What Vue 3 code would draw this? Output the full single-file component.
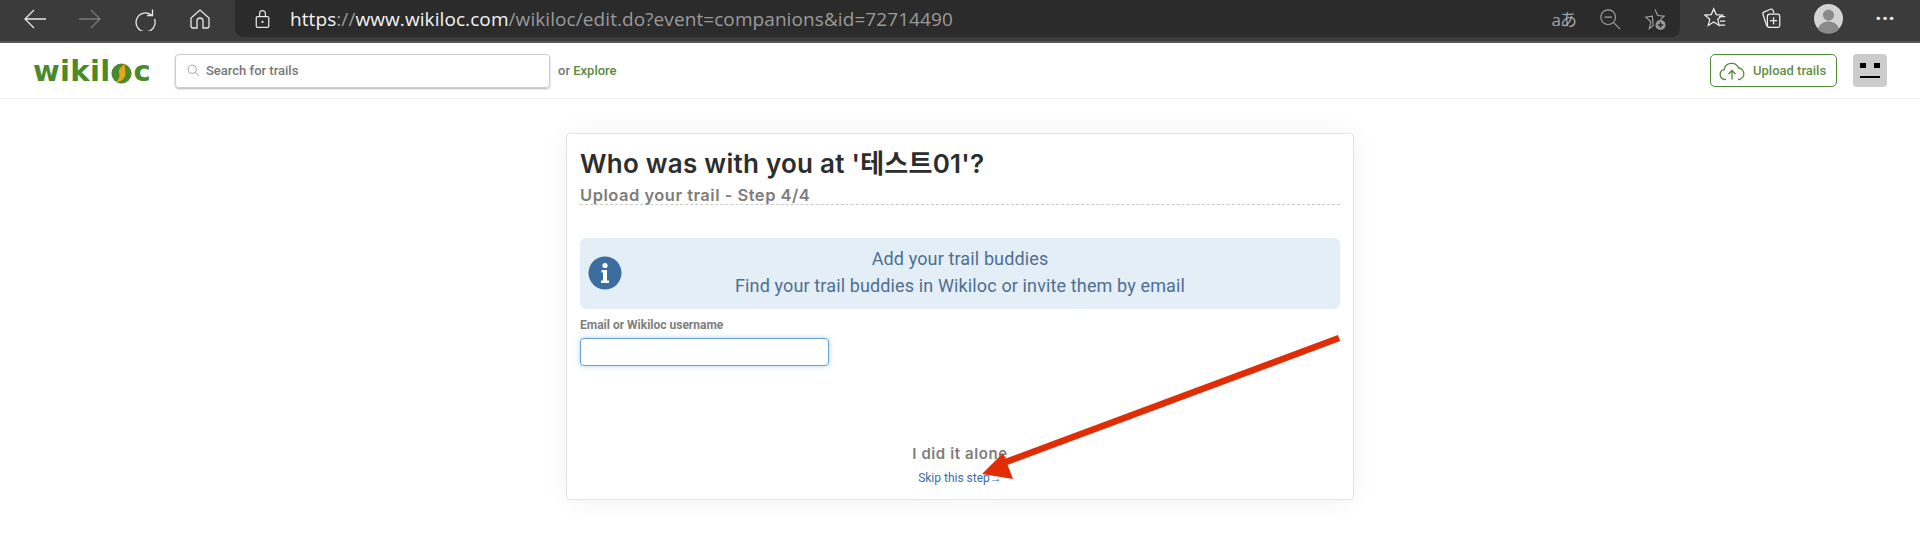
<template>
  <div class="page">
    <div class="browser">
      <div class="browser__nav">
        <svg class="nav-icon" viewBox="0 0 24 24"><path d="M23 12H2M11 3l-9 9 9 9" /></svg>
        <svg class="nav-icon nav-icon--off" viewBox="0 0 24 24"><path d="M1 12h21M13 3l9 9-9 9" /></svg>
        <svg class="nav-icon" viewBox="0 0 24 24"><path d="M19.5 2.5v6H14M19.2 8.500A9.500 9.500 0 1 0 21.500 12" /></svg>
        <svg class="nav-icon" viewBox="0 0 24 24"><path d="M3 11l9-8 9 8v8a2 2 0 0 1-2 2h-4v-7a3 3 0 0 0-6 0v7H5a2 2 0 0 1-2-2z" /></svg>
      </div>
      <div class="address">
        <svg class="lock" viewBox="0 0 18 24"><path d="M3 9h12a1.500 1.500 0 0 1 1.500 1.500v10A1.500 1.500 0 0 1 15 22H3a1.500 1.500 0 0 1-1.500-1.500v-10A1.500 1.500 0 0 1 3 9zM5.500 9V5.500a3.500 3.500 0 0 1 7 0V9" /><circle cx="9" cy="15.500" r="1.300" fill="#eee" stroke="none" /></svg>
        <span class="url"><b>https</b><i>://</i><b>www.wikiloc.com</b><i>/wikiloc/edit.do?event=companions&amp;id=72714490</i></span>
        <div class="address__tools">
          <span class="translate">aあ</span>
          <svg class="tool-icon" viewBox="0 0 24 24"><circle cx="10" cy="10" r="8" /><path d="M6 10h8M16 16l7 7" /></svg>
          <svg class="tool-icon" viewBox="0 0 24 24"><path d="M12 1.500l2.900 6.700 7.100.7-4.200 3.700M10 19.200l-4.200 3.300 1.700-7.500L2 9.900l7.100-1z" /><circle cx="18" cy="18.500" r="5.500" fill="#9a9a9a" stroke="none" /><path d="M15 18.500h6M18 15.500v6" stroke="#2b2b2b" stroke-width="1.600" /></svg>
        </div>
      </div>
      <div class="browser__end">
        <svg class="end-icon" viewBox="0 0 26 26"><path d="M11 2l2.800 6.600 7.200.6-5.500 4.700 1.700 7L11 17l-6.200 3.900 1.700-7L1 9.200l7.200-.6zM17 11h7M18 16h6M18 20.500h6" /></svg>
        <svg class="end-icon" viewBox="0 0 26 26"><path d="M9 22L4.500 8.500a2.500 2.500 0 0 1 1.500-3L13 2.500a2.500 2.500 0 0 1 3 1.500l.8 3" /><rect x="9.500" y="8" width="14" height="15" rx="2.500" /><path d="M16.500 11.500v8M12.500 15.500h8" /></svg>
        <svg class="profile" viewBox="0 0 30 30">
          <circle cx="15" cy="15" r="15" fill="#d4d4d4" />
          <circle cx="15" cy="11.500" r="5.800" fill="#8a8a8a" />
          <path d="M4 26c2-6 6-8 11-8s9 2 11 8a15 15 0 0 1-22 0z" fill="#8a8a8a" />
        </svg>
        <span class="dots">···</span>
      </div>
    </div>

    <header class="topbar">
      <div class="logo">
        <span>wikil</span>
        <svg class="logo__o" viewBox="0 0 24 24">
          <circle cx="12" cy="12" r="11.500" fill="#4a8a2a" />
          <path d="M16 1C10 5 8 8 9.500 12c1 3-.5 7-4 10 6 0 11-4 11-10 0-4-1-7-.5-11z" fill="#e9a21b" />
        </svg>
        <span>c</span>
      </div>
      <div class="search">
        <svg class="search__icon" viewBox="0 0 16 16"><circle cx="6.500" cy="6.500" r="5" /><path d="M10.300 10.300L15 15" /></svg>
        <span>Search for trails</span>
      </div>
      <span class="explore">or <a>Explore</a></span>
      <div class="topbar__end">
        <a class="upload">
          <svg class="upload__icon" viewBox="0 0 26 20"><path d="M7 18.500H6a5 5 0 0 1-.8-9.900A7.500 7.500 0 0 1 19.500 7 5.800 5.800 0 0 1 20 18.500h-1M13 18.500v-9M9.500 13L13 9.500l3.500 3.500" /></svg>
          Upload trails
        </a>
        <div class="robot">
          <div class="robot__eyes"><i></i><i></i></div>
          <div class="robot__mouth"></div>
        </div>
      </div>
    </header>

    <main class="content">
      <section class="card">
        <h1 class="card__title">Who was with you at '테스트01'?</h1>
        <h2 class="card__step">Upload your trail - Step 4/4</h2>
        <div class="info">
          <svg class="info__icon" viewBox="0 0 34 34">
            <circle cx="17" cy="17" r="16.500" fill="#3b6e9e" />
            <circle cx="17" cy="9.500" r="2.600" fill="#fff" />
            <path d="M13.500 14h5.500v10.500h2v2.500h-8v-2.500h2v-8h-1.500z" fill="#fff" />
          </svg>
          <p>Add your trail buddies<br />Find your trail buddies in Wikiloc or invite them by email</p>
        </div>
        <label class="field-label">Email or Wikiloc username</label>
        <input class="field" type="text" />
        <div class="alone">
          <h3>I did it alone</h3>
          <a>Skip this step→</a>
        </div>
      </section>
    </main>

    <svg class="marker" viewBox="0 0 1920 536">
      <path d="M1339 338L995 466" stroke="#e02d06" stroke-width="6.500" fill="none" />
      <path d="M982 474L1003 453 1013 479z" fill="#e02d06" />
    </svg>
  </div>
</template>

<script setup>
</script>

<style>
html,
body {
  background: #fff;
  overflow: hidden;
}
</style>

<style scoped>
.page {
  position: relative;
  height: 536px;
  overflow: hidden;
  background: #fff;
  font-family: Roboto, "Liberation Sans", sans-serif;
}

.browser {
  display: flex;
  height: 41px;
  background: #3b3b3b;
  border-bottom: 2px solid #575757;
}
.browser__nav {
  display: flex;
  align-items: center;
  gap: 31px;
  width: 235px;
  padding: 0 0 4px 23px;
  box-sizing: border-box;
  flex-shrink: 0;
}
.nav-icon {
  width: 24px;
  height: 24px;
  fill: none;
  stroke: #e8e8e8;
  stroke-width: 1.3;
}
.nav-icon--off {
  stroke: #7b7b7b;
}
.address {
  display: flex;
  align-items: center;
  width: 1445px;
  height: 37px;
  padding: 0 14px 0 20px;
  box-sizing: border-box;
  background: #2b2b2b;
  border-radius: 0 0 8px 8px;
}
.lock {
  width: 15px;
  height: 20px;
  margin-right: 20px;
  fill: none;
  stroke: #e6e6e6;
  stroke-width: 1.5;
}
.url {
  font-family: "Open Sans", sans-serif;
  font-size: 19px;
  letter-spacing: 0.08px;
  white-space: nowrap;
}
.url b {
  font-weight: 400;
  color: #f4f4f4;
}
.url i {
  font-style: normal;
  color: #9a9a9a;
}
.address__tools {
  display: flex;
  align-items: center;
  gap: 23px;
  margin-left: auto;
}
.translate {
  font-family: "Open Sans", "Noto Sans CJK JP", sans-serif;
  font-size: 17px;
  color: #a5a5a5;
  letter-spacing: -1px;
}
.tool-icon {
  width: 22px;
  height: 22px;
  fill: none;
  stroke: #a5a5a5;
  stroke-width: 1.2;
}
.browser__end {
  display: flex;
  align-items: center;
  flex: 1;
  padding: 0 0 4px 24px;
  gap: 32px;
  color: #eee;
}
.end-icon {
  width: 23px;
  height: 23px;
  fill: none;
  stroke: #eee;
  stroke-width: 1.4;
}
.profile {
  width: 29px;
  height: 33px;
}
.dots {
  font-size: 22px;
  font-weight: 700;
}

.topbar {
  display: flex;
  align-items: center;
  height: 55px;
  padding-left: 33px;
  border-bottom: 1px solid #eee;
}
.logo {
  display: flex;
  align-items: center;
  width: 142px;
  font-family: "DejaVu Sans", sans-serif;
  font-weight: 700;
  font-size: 29px;
  letter-spacing: 0.3px;
  color: #4a8a2a;
  flex-shrink: 0;
}
.logo__o {
  width: 21px;
  height: 21px;
  margin: 5px 1px 0;
}
.search {
  display: flex;
  align-items: center;
  gap: 6px;
  width: 375px;
  height: 34px;
  padding-left: 11px;
  box-sizing: border-box;
  border: 1px solid #ccc;
  border-radius: 4px;
  box-shadow: 0 1px 2px rgba(0, 0, 0, 0.3);
  font-size: 13px;
  font-weight: 500;
  color: #777;
}
.search__icon {
  width: 13px;
  height: 13px;
  fill: none;
  stroke: #999;
  stroke-width: 1.1;
}
.explore {
  margin-left: 8px;
  font-size: 13px;
  font-weight: 500;
  color: #777;
}
.explore a {
  color: #5a8a42;
}
.topbar__end {
  display: flex;
  align-items: center;
  gap: 16px;
  margin-left: auto;
  padding-right: 33px;
}
.upload {
  display: flex;
  align-items: center;
  gap: 8px;
  width: 127px;
  height: 33px;
  padding-left: 8px;
  box-sizing: border-box;
  border: 1px solid #4f8a35;
  border-radius: 5px;
  font-size: 13px;
  font-weight: 500;
  color: #5f8f48;
}
.upload__icon {
  width: 26px;
  height: 20px;
  fill: none;
  stroke: #4f8a35;
  stroke-width: 1.3;
}
.robot {
  display: flex;
  flex-direction: column;
  align-items: center;
  justify-content: center;
  gap: 8px;
  width: 34px;
  height: 33px;
  background: #ccc;
  border-radius: 4px;
}
.robot__eyes {
  display: flex;
  justify-content: space-between;
  width: 20px;
}
.robot__eyes i {
  width: 6px;
  height: 5px;
  background: #000;
}
.robot__mouth {
  width: 20px;
  height: 2px;
  background: #000;
}

.content {
  display: flex;
  justify-content: center;
  padding-top: 34px;
  background: #fff;
}
.card {
  display: flex;
  flex-direction: column;
  width: 788px;
  height: 367px;
  padding: 14px 13px 0;
  box-sizing: border-box;
  background: #fff;
  border: 1px solid #e4e4e4;
  border-radius: 4px;
  box-shadow: 0 0 24px rgba(0, 0, 0, 0.06);
}
.card__title {
  margin: 0;
  font-family: Inter, "Noto Sans CJK KR", sans-serif;
  font-size: 26px;
  font-weight: 600;
  letter-spacing: 0.25px;
  line-height: 32px;
  color: #2d2d2d;
}
.card__step {
  margin: 0;
  height: 25px;
  padding-top: 4px;
  box-sizing: border-box;
  border-bottom: 1px dashed #c9c9c9;
  font-family: Inter, sans-serif;
  font-size: 16.5px;
  font-weight: 600;
  letter-spacing: 0.5px;
  line-height: 22px;
  color: #7d7d7d;
}
.info {
  position: relative;
  display: flex;
  align-items: center;
  justify-content: center;
  height: 71px;
  margin-top: 33px;
  padding-bottom: 3px;
  box-sizing: border-box;
  background: #e4eef7;
  border-radius: 6px;
  font-size: 18px;
  letter-spacing: 0.13px;
  line-height: 27px;
  color: #4d6f92;
  text-align: center;
}
.info p {
  margin: 0;
}
.info__icon {
  position: absolute;
  left: 8px;
  top: 18px;
  width: 34px;
  height: 34px;
}
.field-label {
  margin-top: 9px;
  font-size: 12px;
  font-weight: 700;
  line-height: 14px;
  color: #7d7d7d;
}
.field {
  width: 249px;
  height: 28px;
  margin-top: 6px;
  padding: 0 8px;
  box-sizing: border-box;
  border: 1px solid #6aa5d5;
  border-radius: 4px;
  outline: none;
  box-shadow: 0 0 5px rgba(90, 160, 220, 0.5);
}
.alone {
  display: flex;
  flex-direction: column;
  align-items: center;
  margin-top: 78px;
}
.alone h3 {
  margin: 0;
  font-family: Inter, sans-serif;
  font-size: 15px;
  font-weight: 600;
  letter-spacing: 0.6px;
  line-height: 20px;
  color: #7d7d7d;
}
.alone a {
  margin-top: 6px;
  font-size: 12px;
  line-height: 16px;
  color: #3a6ea5;
}

.marker {
  position: absolute;
  left: 0;
  top: 0;
  width: 1920px;
  height: 536px;
  pointer-events: none;
}
</style>
